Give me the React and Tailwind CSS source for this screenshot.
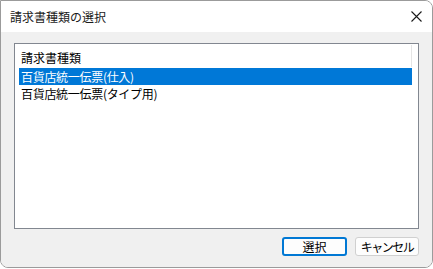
export default function App() {
  return (
    <div className="w-[433px] h-[269px] bg-white overflow-hidden font-['Noto_Sans_CJK_JP','Noto_Sans',sans-serif]">
      <div className="w-[433px] h-[268px] border border-[#9b9b9b] rounded-tr-[8px] rounded-b-[8px] overflow-hidden flex flex-col">
        <div className="h-[31px] bg-white flex items-center justify-between pl-[9px] pr-[9px] shrink-0">
          <span className="text-[12px] leading-none text-[#1a1a1a]">請求書種類の選択</span>
          <svg width="11" height="11" viewBox="0 0 11 11" className="mr-[1px]">
            <path d="M0.5 0.5 L10.5 10.5 M10.5 0.5 L0.5 10.5" stroke="#1a1a1a" strokeWidth="1.1" fill="none" />
          </svg>
        </div>
        <div className="flex-1 bg-[#f0f0f0] flex flex-col pl-[13px] pt-[11px]">
          <div className="w-[405px] h-[186px] border border-[#828790] bg-white pl-[4px] pt-[1px] flex flex-col">
            <div className="h-[23px] w-[393px] flex items-center justify-between relative">
              <span className="text-[12px] leading-none text-black pl-[2px] pt-[2px]">請求書種類</span>
              <div className="w-[1px] h-[22px] bg-[#e5e5e5] self-start"></div>
            </div>
            <div className="h-[17px] w-[393px] bg-[#0078d7] flex items-center">
              <span className="text-[12px] leading-none text-white pl-[2px] tracking-[-0.3px]">百貨店統一伝票(仕入)</span>
            </div>
            <div className="h-[17px] w-[393px] flex items-center">
              <span className="text-[12px] leading-none text-black pl-[2px] tracking-[-0.3px]">百貨店統一伝票(タイプ用)</span>
            </div>
          </div>
          <div className="flex justify-end gap-[8px] w-[405px] mt-[8px]">
            <button className="w-[65px] h-[19px] rounded-[3px] border-2 border-[#0078d4] bg-[#fdfdfd] text-[12px] leading-none text-black flex items-center justify-center">選択</button>
            <button className="w-[64px] h-[19px] rounded-[3px] border border-[#d0d0d0] bg-[#fdfdfd] text-[12px] leading-none text-black flex items-center justify-center tracking-[-1.5px]">キャンセル</button>
          </div>
        </div>
      </div>
    </div>
  );
}
